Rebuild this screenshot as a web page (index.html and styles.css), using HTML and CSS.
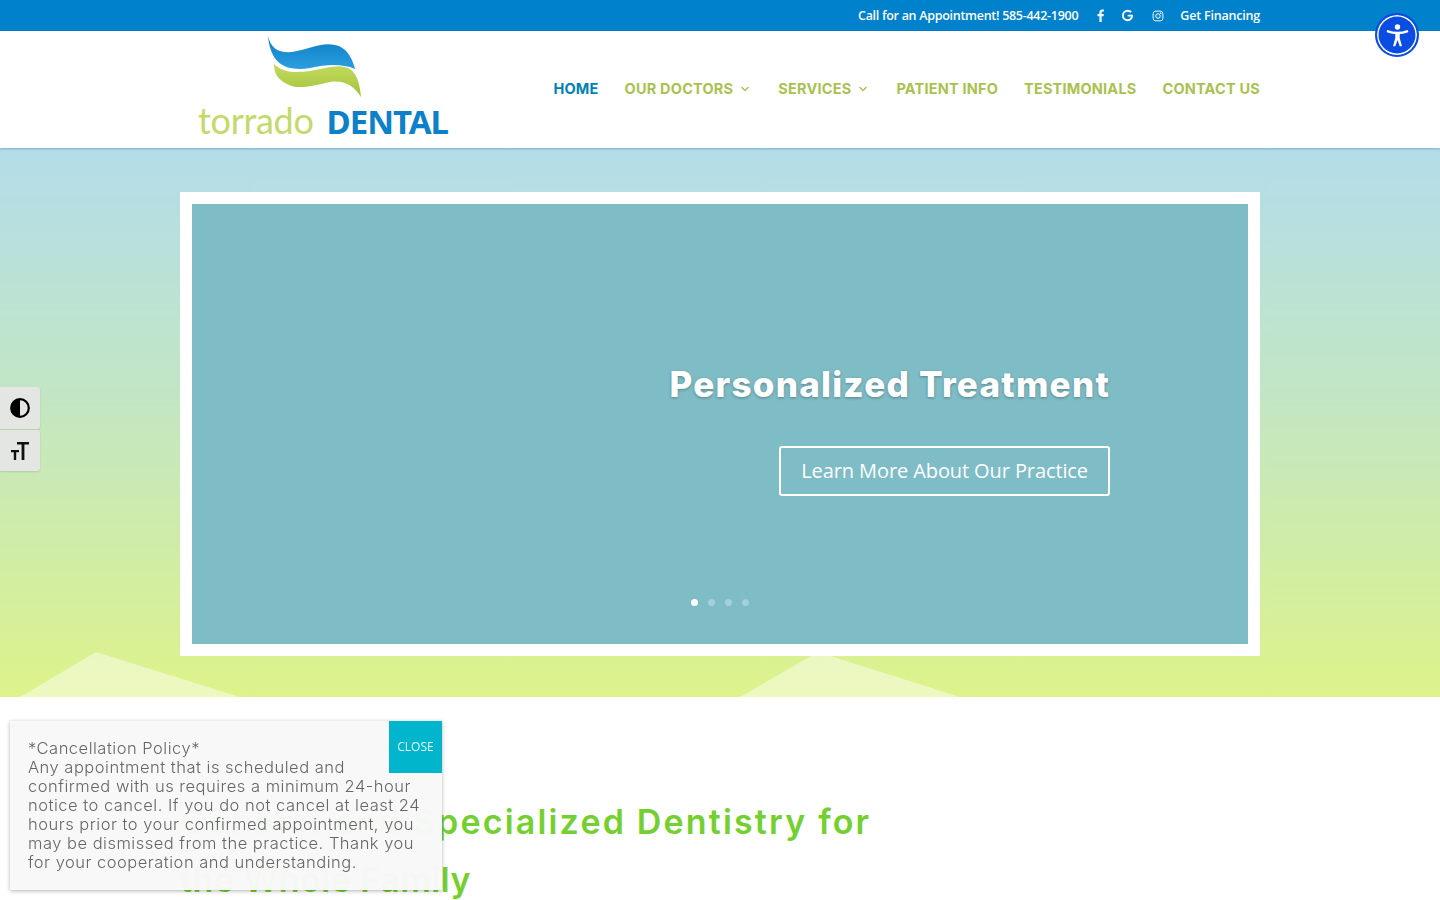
FILE: index.html
```html
<!DOCTYPE html>
<html lang="en">
<head>
  <meta charset="UTF-8">
  <title>Torrado Dental</title>
  <link rel="stylesheet" href="styles.css">
</head>
<body>
  <div class="topbar">
    <div class="container topbar-inner">
      <span class="top-text top-phone">Call for an Appointment! 585-442-1900</span>
      <svg class="soc soc-f" viewBox="0 0 10 16"><path d="M6.4 16V8.9h2.3l.4-2.8H6.4V4.4c0-.8.2-1.3 1.4-1.3h1.4V.6C9 .5 8.100.5 7.200.5 5.100.5 3.700 1.700 3.700 4v2.100H1.300v2.800h2.400V16z" fill="#fff"/></svg>
      <svg class="soc soc-g" viewBox="0 0 16 16"><path d="M13.500 3.200A7 7 0 0 0 8.200 1a7 7 0 1 0 0 14c3.900 0 6.500-2.700 6.500-6.600V7H8.200v2.300h4.100c-.4 1.900-2 3.300-4.100 3.300a4.600 4.600 0 1 1 0-9.200c1.300 0 2.400.5 3.300 1.300z" fill="#fff"/></svg>
      <svg class="soc soc-i" viewBox="0 0 16 16" fill="none" stroke="#fff" stroke-width="1.300"><rect x="1.500" y="1.500" width="13" height="13" rx="3.500"/><circle cx="8" cy="8" r="3"/><circle cx="11.800" cy="4.200" r=".5" fill="#fff"/></svg>
      <span class="top-text">Get Financing</span>
    </div>
  </div>

  <header class="header">
    <div class="container header-inner">
      <a class="logo">
        <svg class="logo-wave" viewBox="0 0 94 61">
          <defs>
            <linearGradient id="waveBlue" x1="0" y1="0" x2="0" y2="1"><stop offset="0" stop-color="#0b7cc4"/><stop offset="1" stop-color="#2b9fdf"/></linearGradient>
            <linearGradient id="waveGreen" x1="0" y1="0" x2="0" y2="1"><stop offset="0" stop-color="#c6da5e"/><stop offset="1" stop-color="#9fc43c"/></linearGradient>
          </defs>
          <path d="M0 0C3 13 11 17 24 16C40 14 52 6 67 9C78 11 84 21 87 33C72 27 58 29 42 32C22 35 3 32 0 0Z" fill="url(#waveBlue)"/>
          <path d="M6 28C15 37 28 37 42 35C58 32 72 27 82 33C90 39 92 50 93 61C86 50 76 44 62 46C48 49 32 54 21 49C10 44 6 38 6 28Z" fill="url(#waveGreen)"/>
        </svg>
        <div class="logo-text"><span class="logo-light">torrado</span><span class="logo-bold">DENTAL</span></div>
      </a>
      <nav class="nav">
        <a class="nav-link active">HOME</a>
        <a class="nav-link">OUR DOCTORS<svg class="chev" viewBox="0 0 10 6"><path d="M1.500 1l3.500 3.500L8.500 1" fill="none" stroke="#a9c24f" stroke-width="1.300"/></svg></a>
        <a class="nav-link">SERVICES<svg class="chev" viewBox="0 0 10 6"><path d="M1.500 1l3.500 3.500L8.500 1" fill="none" stroke="#a9c24f" stroke-width="1.300"/></svg></a>
        <a class="nav-link">PATIENT INFO</a>
        <a class="nav-link">TESTIMONIALS</a>
        <a class="nav-link">CONTACT US</a>
      </nav>
    </div>
  </header>

  <section class="hero">
    <svg class="hero-peaks" viewBox="0 0 1440 45" preserveAspectRatio="none">
      <polygon points="20,45 96,0 240,45" fill="#fff" fill-opacity=".45"/>
      <polygon points="740,45 818,0 960,45" fill="#fff" fill-opacity=".45"/>
    </svg>
    <div class="container slider-frame">
      <div class="slide">
        <h2 class="slide-title">Personalized Treatment</h2>
        <a class="slide-btn">Learn More About Our Practice</a>
        <div class="dots">
          <span class="dot on"></span><span class="dot"></span><span class="dot"></span><span class="dot"></span>
        </div>
      </div>
    </div>
  </section>

  <section class="intro">
    <div class="container">
      <h2 class="intro-title">General and Specialized Dentistry for<br><span class="intro-second">the Whole Family</span></h2>
    </div>
  </section>

  <!-- things that float over the page -->
  <div class="a11y-btn">
    <svg viewBox="0 0 24 24" width="27" height="27"><circle cx="12" cy="4.400" r="2.400" fill="#fff"/><path d="M3.500 8.300C6 9.300 8.500 9.800 12 9.800S18 9.300 20.500 8.300" fill="none" stroke="#fff" stroke-width="2.200" stroke-linecap="round"/><path d="M10 10h4v4.500l2 7h-2l-2-5.500-2 5.500H8l2-7z" fill="#fff"/></svg>
  </div>

  <div class="toolbar">
    <div class="tool">
      <svg viewBox="0 0 20 20" width="20" height="20"><circle cx="10" cy="10" r="8.800" fill="none" stroke="#000" stroke-width="2.200"/><path d="M10 1.200a8.800 8.800 0 0 0 0 17.600z" fill="#000"/></svg>
    </div>
    <div class="tool">
      <svg viewBox="0 0 20 20" width="20" height="20"><path d="M7 1h12v2.600h-4.600V19h-2.800V3.600H7zM1 9h8v2.200H6.200V19H3.800v-7.800H1z" fill="#111"/></svg>
    </div>
  </div>

  <aside class="notice">
    <a class="notice-close">CLOSE</a>
    <p>*Cancellation Policy*<br>Any appointment that is scheduled and confirmed with us requires a minimum 24-hour notice to cancel. If you do not cancel at least 24 hours prior to your confirmed appointment, you may be dismissed from the practice. Thank you for your cooperation and understanding.</p>
  </aside>
</body>
</html>
```

FILE: styles.css
```css
* {
  margin: 0;
  padding: 0;
  box-sizing: border-box;
}
html, body {
  height: 900px;
  overflow: hidden;
}
body {
  font-family: "Open Sans", sans-serif;
  background: #fff;
  color: #666;
}
.container {
  width: 1080px;
  margin: 0 auto;
}

/* top bar */
.topbar {
  height: 31px;
  background: #0081cb;
  color: #fff;
}
.topbar-inner {
  height: 100%;
  display: flex;
  align-items: center;
  justify-content: flex-end;
}
.top-text {
  font-size: 12.500px;
  font-weight: 600;
  letter-spacing: -0.2px;
  white-space: nowrap;
}
.top-phone {
  letter-spacing: -0.28px;
}
.soc {
  display: block;
}
.soc-f {
  width: 9px;
  height: 13px;
  margin-left: 18px;
}
.soc-g {
  width: 13px;
  height: 13px;
  margin-left: 16px;
}
.soc-i {
  width: 12px;
  height: 12px;
  margin-left: 18px;
  margin-right: 16px;
}

/* header */
.header {
  height: 117px;
  background: #fff;
  box-shadow: 0 1px 2px rgba(0, 60, 120, 0.3);
  position: relative;
  z-index: 2;
}
.header-inner {
  height: 100%;
  display: flex;
  justify-content: space-between;
}
.logo {
  display: flex;
  flex-direction: column;
  padding: 5px 0 0 18px;
}
.logo-wave {
  display: block;
  width: 94px;
  height: 61px;
  margin-left: 70px;
}
.logo-text {
  display: flex;
  align-items: baseline;
  margin-top: 3px;
  line-height: 40px;
  white-space: nowrap;
}
.logo-light {
  font-family: Lato, sans-serif;
  font-weight: 400;
  font-size: 36px;
  letter-spacing: -0.3px;
  color: #c3d96a;
}
.logo-bold {
  font-family: "Noto Sans", sans-serif;
  font-weight: 700;
  font-size: 33px;
  letter-spacing: -1px;
  color: #0c80c8;
  margin-left: 13px;
}
.nav {
  display: flex;
  align-items: center;
  gap: 26px;
  padding-bottom: 2px;
}
.nav-link {
  display: flex;
  align-items: center;
  font-family: Inter, sans-serif;
  font-weight: 700;
  font-size: 14.500px;
  letter-spacing: 0.2px;
  color: #a9c24f;
  white-space: nowrap;
}
.nav-link.active {
  color: #0081b8;
}
.chev {
  width: 10px;
  height: 6px;
  margin: 0 2px 0 7px;
}

/* hero */
.hero {
  position: relative;
  height: 549px;
  padding-top: 44px;
  background: linear-gradient(180deg, #b3dcea 0%, #c2e6c4 45%, #ddf38a 100%);
}
.hero-peaks {
  position: absolute;
  left: 0;
  bottom: 0;
  width: 100%;
  height: 45px;
}
.slider-frame {
  position: relative;
  height: 464px;
  border: 12px solid #fff;
}
.slide {
  height: 100%;
  position: relative;
  background: #7ebcc6;
  display: flex;
  flex-direction: column;
  align-items: flex-end;
  padding: 158px 138px 0 0;
}
.slide-title {
  font-family: Inter, sans-serif;
  font-weight: 800;
  font-size: 35px;
  letter-spacing: 1.25px;
  line-height: 45px;
  margin-bottom: 1px;
  color: #fff;
  text-shadow: 0 1px 3px rgba(0, 0, 0, 0.3);
  white-space: nowrap;
}
.slide-btn {
  margin-top: 38px;
  height: 50px;
  padding: 0 20px 2px;
  display: flex;
  align-items: center;
  border: 2px solid #fff;
  border-radius: 3px;
  font-size: 20px;
  letter-spacing: -0.1px;
  color: #fff;
  white-space: nowrap;
}
.dots {
  position: absolute;
  left: 0;
  right: 0;
  bottom: 38px;
  display: flex;
  justify-content: center;
  gap: 10px;
}
.dot {
  width: 7px;
  height: 7px;
  border-radius: 50%;
  background: rgba(255, 255, 255, 0.3);
}
.dot.on {
  background: #fff;
}

/* intro under the hero */
.intro {
  padding-top: 96px;
}
.intro-title {
  font-family: Inter, sans-serif;
  font-weight: 600;
  font-size: 34px;
  letter-spacing: 2.17px;
  line-height: 58px;
  color: #74d02f;
  white-space: nowrap;
}
.intro-second {
  letter-spacing: 0.5px;
}

/* floating stuff */
.a11y-btn {
  position: fixed;
  top: 13px;
  left: 1375px;
  width: 44px;
  height: 44px;
  border-radius: 50%;
  background: #0b4ce3;
  border: 2px solid #0b4ce3;
  box-shadow: inset 0 0 0 1.500px #fff, inset 0 0 0 3px #0b4ce3;
  display: flex;
  align-items: center;
  justify-content: center;
  z-index: 5;
}
.toolbar {
  position: fixed;
  left: 0;
  top: 387px;
  width: 40px;
  display: flex;
  flex-direction: column;
  gap: 1px;
  z-index: 5;
}
.tool {
  height: 42px;
  background: #e4e6e3;
  border-radius: 0 3px 3px 0;
  display: flex;
  align-items: center;
  justify-content: center;
  box-shadow: 0 1px 2px rgba(0, 0, 0, 0.12);
}
.tool + .tool {
  height: 41px;
}
.notice {
  position: fixed;
  left: 10px;
  top: 721px;
  width: 432px;
  height: 169px;
  padding: 18px 18px 0;
  background: rgba(248, 248, 248, 0.98);
  box-shadow: 0 1px 4px rgba(0, 0, 0, 0.3);
  z-index: 5;
}
.notice p {
  font-family: Inter, sans-serif;
  font-weight: 300;
  font-size: 16.500px;
  letter-spacing: 0.5px;
  line-height: 19px;
  color: #666;
}
.notice-close {
  position: absolute;
  top: 0;
  right: 0;
  width: 53px;
  height: 52px;
  padding-bottom: 2px;
  background: #00b5cc;
  color: #e8fbff;
  font-size: 12px;
  display: flex;
  align-items: center;
  justify-content: center;
}
```
